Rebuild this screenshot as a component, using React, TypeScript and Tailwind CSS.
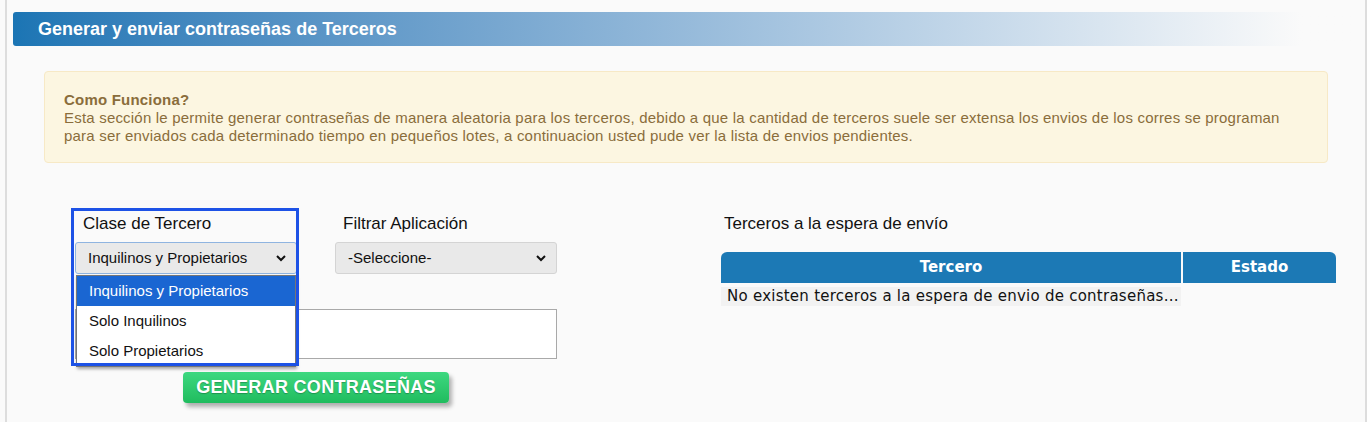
import React, { useState } from "react";

const opciones = ["Inquilinos y Propietarios", "Solo Inquilinos", "Solo Propietarios"];

const Chevron: React.FC = () => (
  <svg width="12" height="12" viewBox="0 0 12 12" className="shrink-0">
    <path d="M2 4 L6 8 L10 4" fill="none" stroke="#111" strokeWidth="2" />
  </svg>
);

const App: React.FC = () => {
  const [clase, setClase] = useState(opciones[0]);

  return (
    <div className="h-[422px] bg-[#fafafa] font-['Liberation_Sans',Arial,sans-serif]">
      <div className="ml-[5px] w-[1362px] h-full border-x-2 border-[#dddddd] pt-[12px]">
        {/* titulo */}
        <div className="ml-[6px] mr-[10px] h-[34px] rounded-l-[3px] bg-linear-to-r from-[#1b75b4] from-0% to-[#fafafa] to-[96%] flex items-center pl-[25px]">
          <h1 className="text-white font-bold text-[18px]">Generar y enviar contraseñas de Terceros</h1>
        </div>

        {/* alerta */}
        <div className="mx-[37px] mt-[25px] h-[92px] rounded-[4px] border border-[#f7e9c6] bg-[#fcf6e1] px-[19px] pt-[19px] text-[15px] tracking-[0.2px] leading-[18px] text-[#8a6d3b]">
          <p className="font-bold">Como Funciona?</p>
          <p className="whitespace-nowrap">
            Esta sección le permite generar contraseñas de manera aleatoria para los terceros, debido a que la cantidad de terceros suele ser extensa los envios de los corres se programan
            <br />
            para ser enviados cada determinado tiempo en pequeños lotes, a continuacion usted pude ver la lista de envios pendientes.
          </p>
        </div>

        <div className="flex mt-[51px]">
          {/* formulario */}
          <div className="ml-[68px] w-[482px] flex flex-col">
            <div className="flex gap-[38px]">
              <div className="relative w-[222px]">
                <label className="block pl-[8px] text-[17px] leading-[20px] text-[#111]">Clase de Tercero</label>
                <div className="mt-[8px] h-[32px] rounded-[3px] border border-[#8fb4e0] bg-[#e9e9e9] flex items-center justify-between pl-[12px] pr-[9px] text-[15px] text-[#111]">
                  <span>{clase}</span>
                  <Chevron />
                </div>
                {/* lista desplegada */}
                <ul className="absolute left-[1px] top-[61px] w-[220px] z-10 bg-white border border-[#767676] shadow-[1px_2px_3px_rgba(0,0,0,0.35)]">
                  {opciones.map((o) => (
                    <li
                      key={o}
                      onClick={() => setClase(o)}
                      className={
                        o === clase
                          ? "h-[30px] flex items-center pl-[12px] text-[15px] bg-[#1a66d2] text-white"
                          : "h-[30px] flex items-center pl-[12px] text-[15px] text-[#111]"
                      }
                    >
                      {o}
                    </li>
                  ))}
                </ul>
                <div className="absolute -left-[4px] -top-[6px] w-[228px] h-[158px] z-20 border-[3px] border-[#1d52e6] pointer-events-none" />
              </div>
              <div className="w-[222px]">
                <label className="block pl-[8px] text-[17px] leading-[20px] text-[#111]">Filtrar Aplicación</label>
                <div className="mt-[8px] h-[32px] rounded-[3px] border border-[#d4d4d4] bg-[#e9e9e9] flex items-center justify-between pl-[12px] pr-[9px] text-[15px] text-[#111]">
                  <span>-Seleccione-</span>
                  <Chevron />
                </div>
              </div>
            </div>
            <textarea className="mt-[35px] h-[50px] w-full border border-[#a9a9a9] bg-white resize-none" />
            <button className="self-center mt-[13px] w-[266px] h-[31px] rounded-[4px] bg-linear-to-b from-[#3dd880] to-[#1fbc5e] text-white font-bold text-[18px] tracking-[0.3px] [text-shadow:0_1px_1px_rgba(0,0,0,0.25)] shadow-[3px_4px_4px_rgba(0,0,0,0.3)]">
              GENERAR CONTRASEÑAS
            </button>
          </div>

          {/* envios pendientes */}
          <div className="ml-[164px] w-[615px]">
            <p className="pl-[3px] text-[17px] leading-[20px] text-[#111]">Terceros a la espera de envío</p>
            <div className="mt-[18px] font-['DejaVu_Sans',Verdana,sans-serif]">
              <div className="flex h-[31px] gap-[2px] text-white font-bold text-[15px]">
                <div className="w-[460px] bg-[#1c79b5] rounded-tl-[6px] flex items-center justify-center">Tercero</div>
                <div className="flex-1 bg-[#1c79b5] rounded-tr-[6px] flex items-center justify-center">Estado</div>
              </div>
              <div className="mt-[4px] w-[460px] h-[19px] bg-[#f2f2f2] flex items-center pl-[6px] text-[15px] tracking-[0.25px] text-[#111] whitespace-nowrap">
                No existen terceros a la espera de envio de contraseñas...
              </div>
            </div>
          </div>
        </div>
      </div>
    </div>
  );
};

export default App;
